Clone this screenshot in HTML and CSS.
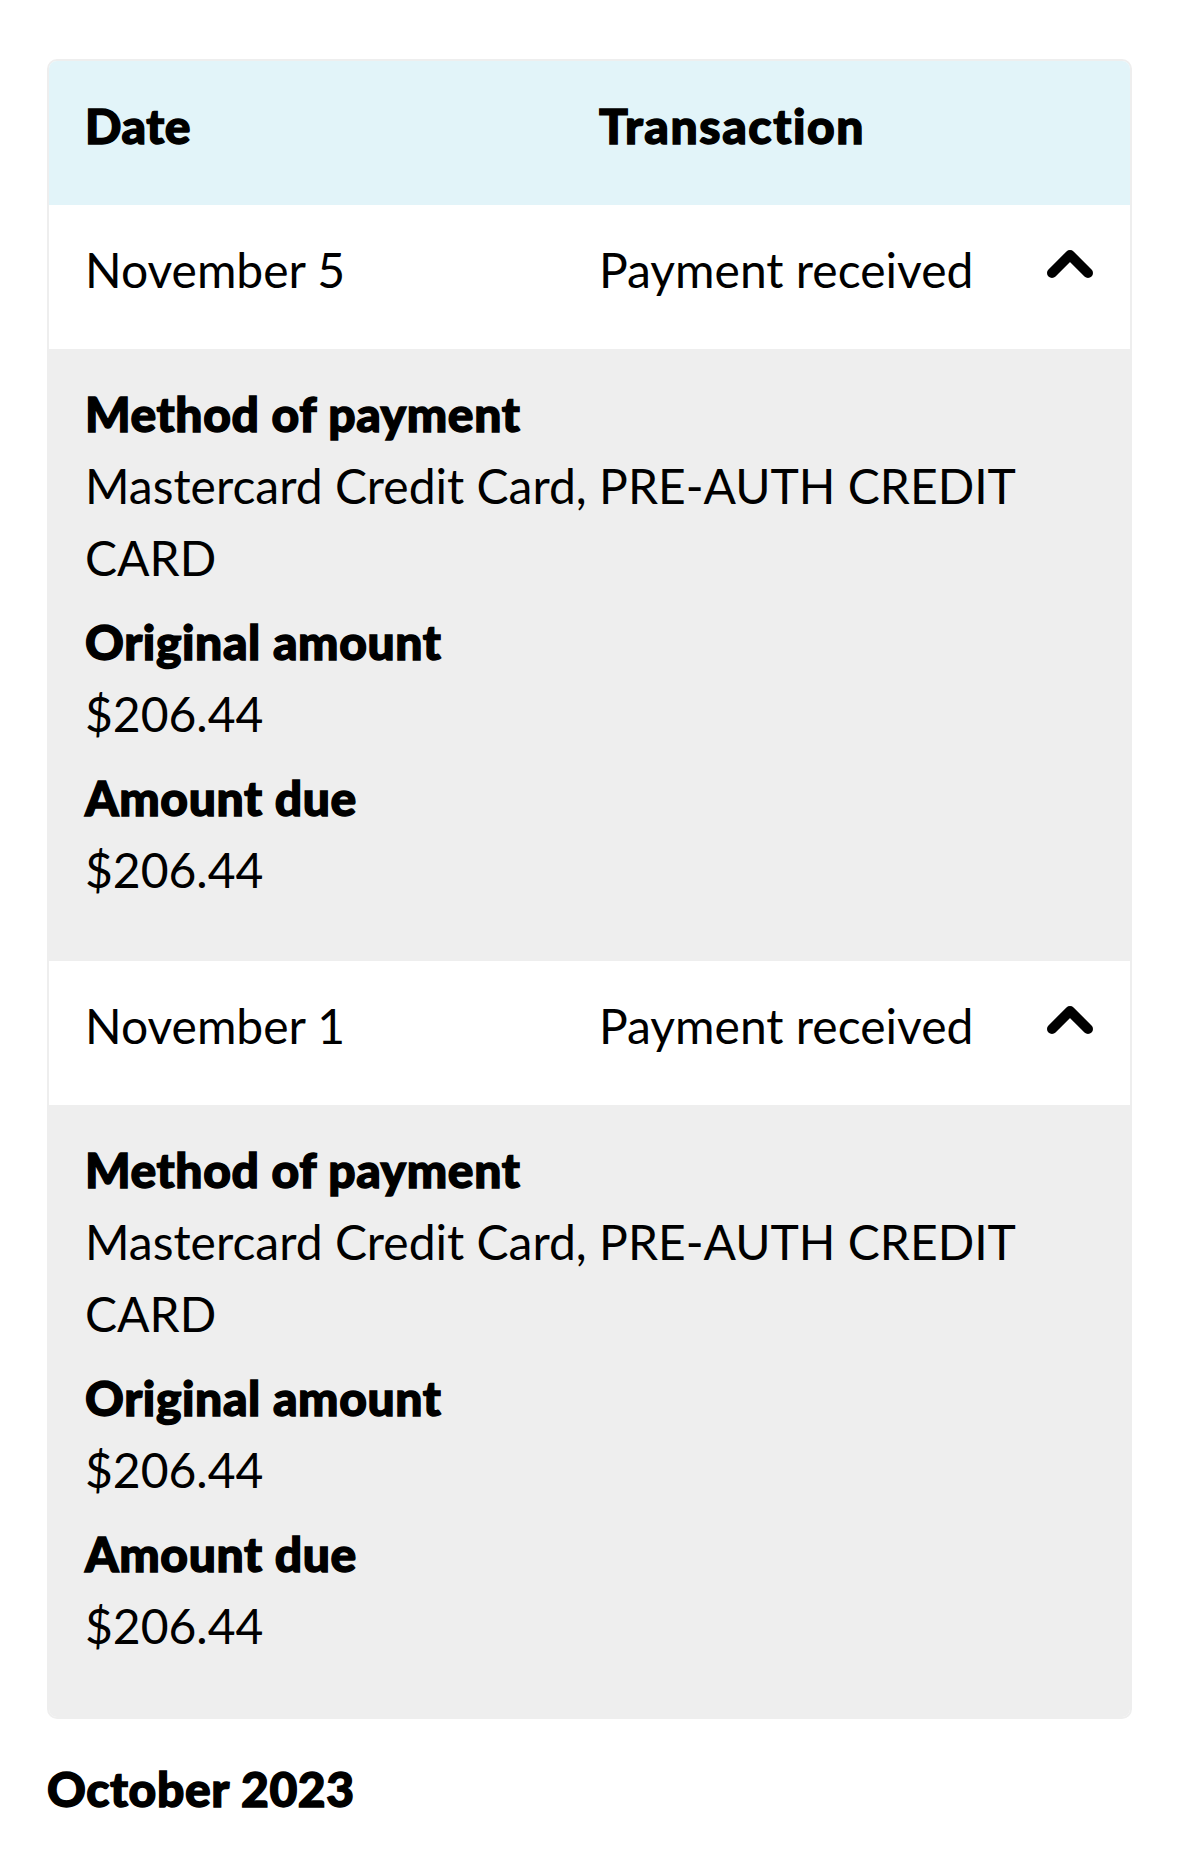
FILE: index.html
```html
<!DOCTYPE html>
<html lang="en">
<head>
    <meta charset="UTF-8" />
    <meta name="viewport" content="width=device-width, initial-scale=1.0" />
    <title>Transactions</title>
    <link rel="stylesheet" href="styles.css">
</head>
<body>
    <div class="history">
        <div class="table">
            <div class="row head">
                <div>Date</div>
                <div>Transaction</div>
                <div></div>
            </div>

            <!-- November 5 -->
            <div class="row">
                <div>November 5</div>
                <div>Payment received</div>
                <button class="toggle" aria-label="Collapse">
                    <svg width="48" height="32" viewBox="0 0 48 32"><polyline points="6,26 24,8 42,26" fill="none" stroke="#000" stroke-width="10" stroke-linecap="round" stroke-linejoin="round"/></svg>
                </button>
            </div>
            <div class="details">
                <div class="field">
                    <div class="label">Method of payment</div>
                    <div class="value">Mastercard Credit Card, PRE-AUTH CREDIT CARD</div>
                </div>
                <div class="field">
                    <div class="label">Original amount</div>
                    <div class="value">$206.44</div>
                </div>
                <div class="field">
                    <div class="label">Amount due</div>
                    <div class="value">$206.44</div>
                </div>
            </div>

            <!-- November 1 -->
            <div class="row">
                <div>November 1</div>
                <div>Payment received</div>
                <button class="toggle" aria-label="Collapse">
                    <svg width="48" height="32" viewBox="0 0 48 32"><polyline points="6,26 24,8 42,26" fill="none" stroke="#000" stroke-width="10" stroke-linecap="round" stroke-linejoin="round"/></svg>
                </button>
            </div>
            <div class="details">
                <div class="field">
                    <div class="label">Method of payment</div>
                    <div class="value">Mastercard Credit Card, PRE-AUTH CREDIT CARD</div>
                </div>
                <div class="field">
                    <div class="label">Original amount</div>
                    <div class="value">$206.44</div>
                </div>
                <div class="field">
                    <div class="label">Amount due</div>
                    <div class="value">$206.44</div>
                </div>
            </div>
        </div>

        <h2 class="month">October 2023</h2>
    </div>
</body>
</html>
```

FILE: styles.css
```css
body {
    font-family: Lato, "Open Sans", sans-serif;
    margin: 0;
    background-color: #ffffff;
    color: #000;
}
.history {
    padding: 59px 47px 0;
}
.table {
    border: 2px solid #eeeeee;
    border-radius: 10px;
    overflow: hidden;
}
.row {
    display: grid;
    grid-template-columns: 514px 1fr 48px;
    align-items: start;
    padding: 29px 36px 43px;
    font-size: 48px;
    line-height: 72px;
    background-color: #ffffff;
}
.row.head {
    background-color: #e2f4f9;
}
.row.head,
.label,
.month {
    font-weight: 900;
    -webkit-text-stroke: 1.4px #000;
    letter-spacing: 0.6px;
}
.row.head div:nth-child(2) {
    letter-spacing: 1.6px;
}
.toggle {
    background: none;
    border: none;
    padding: 0;
    margin-top: 13px;
    cursor: pointer;
    line-height: 0;
}
.details {
    background-color: #eeeeee;
    padding: 29px 100px 55px 36px;
    font-size: 48px;
    line-height: 72px;
}
.field + .field {
    margin-top: 12px;
}
.month {
    font-size: 48px;
    line-height: 72px;
    margin: 34px 0 0;
}
```
